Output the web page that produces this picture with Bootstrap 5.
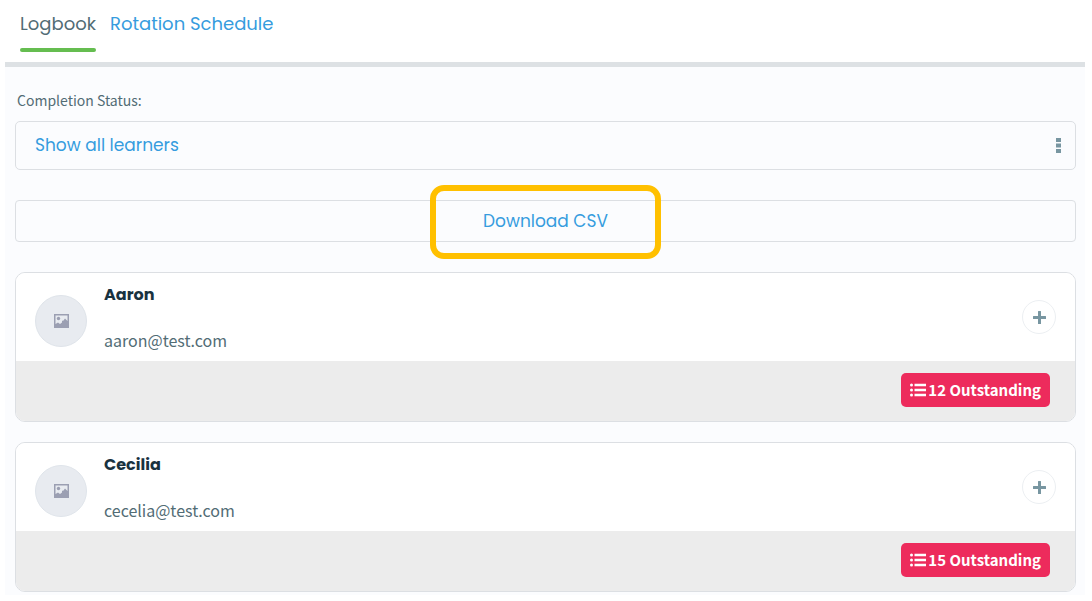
<!DOCTYPE html>
<html lang="en">
<head>
<meta charset="utf-8">
<meta name="viewport" content="width=device-width, initial-scale=1">
<title>Logbook</title>
<link href="https://cdn.jsdelivr.net/npm/bootstrap@5.3.0/dist/css/bootstrap.min.css" rel="stylesheet">
<style>
  :root { --heading: Poppins, Inter, sans-serif; --copy: "Source Sans Pro", "Noto Sans CJK SC", sans-serif; --line: #dcdfe3; --link: #369cde; }
  body { background: #fff; color: #526c75; font-family: var(--copy); font-size: 16px; line-height: 24px; }
  .page { margin: 0 7px 6px 5px; background: #fbfcfe; }
  .tabs { height: 67px; padding: 9px 15px 0; gap: 14px; background: #fff; border-bottom: 5px solid #dde1e4; font-family: var(--heading); font-size: 18px; line-height: 30px; }
  .tabs .nav-link { height: 44px; padding: 0; color: var(--link); }
  .tabs .nav-link.active { color: #526c75; }
  .tabs .nav-link.active::after { content: ""; display: block; height: 4px; margin-top: 9px; border-radius: 2px; background: #65bd50; }
  .content { padding: 22px 9px 3px 10px; }
  .status-label { font-size: 14px; line-height: 22px; margin: 0 0 10px 2px; display: block; }
  .status-select { height: 49px; padding: 0 40px 0 19px; border: 1px solid var(--line); border-radius: 5px; color: var(--link); font-family: var(--heading); font-size: 17px; cursor: pointer;
    background: transparent url("data:image/svg+xml,%3Csvg xmlns='http://www.w3.org/2000/svg' viewBox='0 0 5 15'%3E%3Cpath fill='%237896a1' d='M0 0h5v4H0zM0 5.500h5v4H0zM0 11h5v4H0z'/%3E%3C/svg%3E") no-repeat right 14px center / 5px 15px; }
  .download { margin: 30px 0; }
  .download .btn { height: 42px; padding: 2px 0 0; border: 1px solid var(--line); border-radius: 4px; color: var(--link); font-family: var(--heading); font-size: 17px; }
  .callout { position: absolute; inset: -15px 0 -17px; width: 231px; margin: 0 auto; border: 6px solid #ffc000; border-radius: 14px; pointer-events: none; }
  .learners { gap: 20px; }
  .learner { border: 1px solid var(--line); border-radius: 10px; overflow: hidden; }
  .learner-head { height: 88px; padding: 0 19px; gap: 17px; background: #fff; }
  .avatar { width: 52px; height: 52px; margin-top: 8px; border: 1px solid #dfe4ea; background: #e8ebf0; }
  .learner-name { margin: 0 0 21px; font-family: var(--heading); font-size: 16px; font-weight: 700; line-height: 24px; color: #19323f; }
  .add { width: 34px; height: 34px; padding: 0; border: 1px solid #eceff2; background: #fff; }
  .learner-foot { height: 60px; padding: 0 25px 3px; background: #ececec; }
  .due { height: 34px; padding: 0 9px; gap: 2px; border: 0; border-radius: 5px; background: #ed2b5c; color: #fff; font-size: 15px; font-weight: 700; line-height: 24px; }
  .due:hover { background: #d82251; color: #fff; }
</style>
</head>
<body>
<svg class="d-none">
  <symbol id="picture" viewBox="0 0 15 14"><path fill="#9b9fb2" fill-rule="evenodd" d="M0 0h15v14H0zM1.500 1.500v8.500L4 8.500l2 1.500 2-1.500V6.500l1 .5 2-2.500L13.500 7V1.500z"/><circle cx="4.500" cy="4.500" r="1.700" fill="#9b9fb2"/></symbol>
  <symbol id="plus" viewBox="0 0 13 13"><path fill="#7896a1" d="M5.500 0h2q.5 0 .5.500V5h4.500q.5 0 .5.500v2q0 .5-.5.500H8v4.500q0 .5-.5.500h-2q-.5 0-.5-.5V8H.5Q0 8 0 7.500v-2Q0 5 .5 5H5V.5q0-.5.500-.5z"/></symbol>
  <symbol id="list" viewBox="0 0 16 14"><g fill="#fff"><circle cx="1.500" cy="2" r="1.500"/><circle cx="1.500" cy="7" r="1.500"/><circle cx="1.500" cy="12" r="1.500"/><path d="M4.500 .8H16v2.500H4.500zM4.500 5.800H16v2.500H4.500zM4.500 10.800H16v2.500H4.500z"/></g></symbol>
</svg>
<main class="page">
  <nav class="nav tabs">
    <a class="nav-link active" aria-current="page" href="#logbook">Logbook</a>
    <a class="nav-link" href="#schedule">Rotation Schedule</a>
  </nav>
  <div class="content">
    <label class="status-label" for="status">Completion Status:</label>
    <select class="form-select status-select" id="status"><option>Show all learners</option></select>
    <div class="download position-relative">
      <button type="button" class="btn w-100">Download CSV</button>
      <div class="callout"></div>
    </div>
    <div class="d-grid learners">
      <article class="learner">
        <div class="learner-head d-flex align-items-center">
          <div class="avatar rounded-circle d-flex align-items-center justify-content-center"><svg width="15" height="14"><use href="#picture"/></svg></div>
          <div class="flex-grow-1"><h2 class="learner-name">Aaron</h2><div>aaron@test.com</div></div>
          <button type="button" class="btn add rounded-circle d-flex align-items-center justify-content-center" aria-label="Expand Aaron"><svg width="13" height="13"><use href="#plus"/></svg></button>
        </div>
        <div class="learner-foot d-flex align-items-center justify-content-end">
          <button type="button" class="btn due d-flex align-items-center"><svg width="16" height="14"><use href="#list"/></svg><span>12 Outstanding</span></button>
        </div>
      </article>
      <article class="learner">
        <div class="learner-head d-flex align-items-center">
          <div class="avatar rounded-circle d-flex align-items-center justify-content-center"><svg width="15" height="14"><use href="#picture"/></svg></div>
          <div class="flex-grow-1"><h2 class="learner-name">Cecilia</h2><div>cecelia@test.com</div></div>
          <button type="button" class="btn add rounded-circle d-flex align-items-center justify-content-center" aria-label="Expand Cecilia"><svg width="13" height="13"><use href="#plus"/></svg></button>
        </div>
        <div class="learner-foot d-flex align-items-center justify-content-end">
          <button type="button" class="btn due d-flex align-items-center"><svg width="16" height="14"><use href="#list"/></svg><span>15 Outstanding</span></button>
        </div>
      </article>
    </div>
  </div>
</main>
<script src="https://cdn.jsdelivr.net/npm/bootstrap@5.3.0/dist/js/bootstrap.bundle.min.js"></script>
</body>
</html>
